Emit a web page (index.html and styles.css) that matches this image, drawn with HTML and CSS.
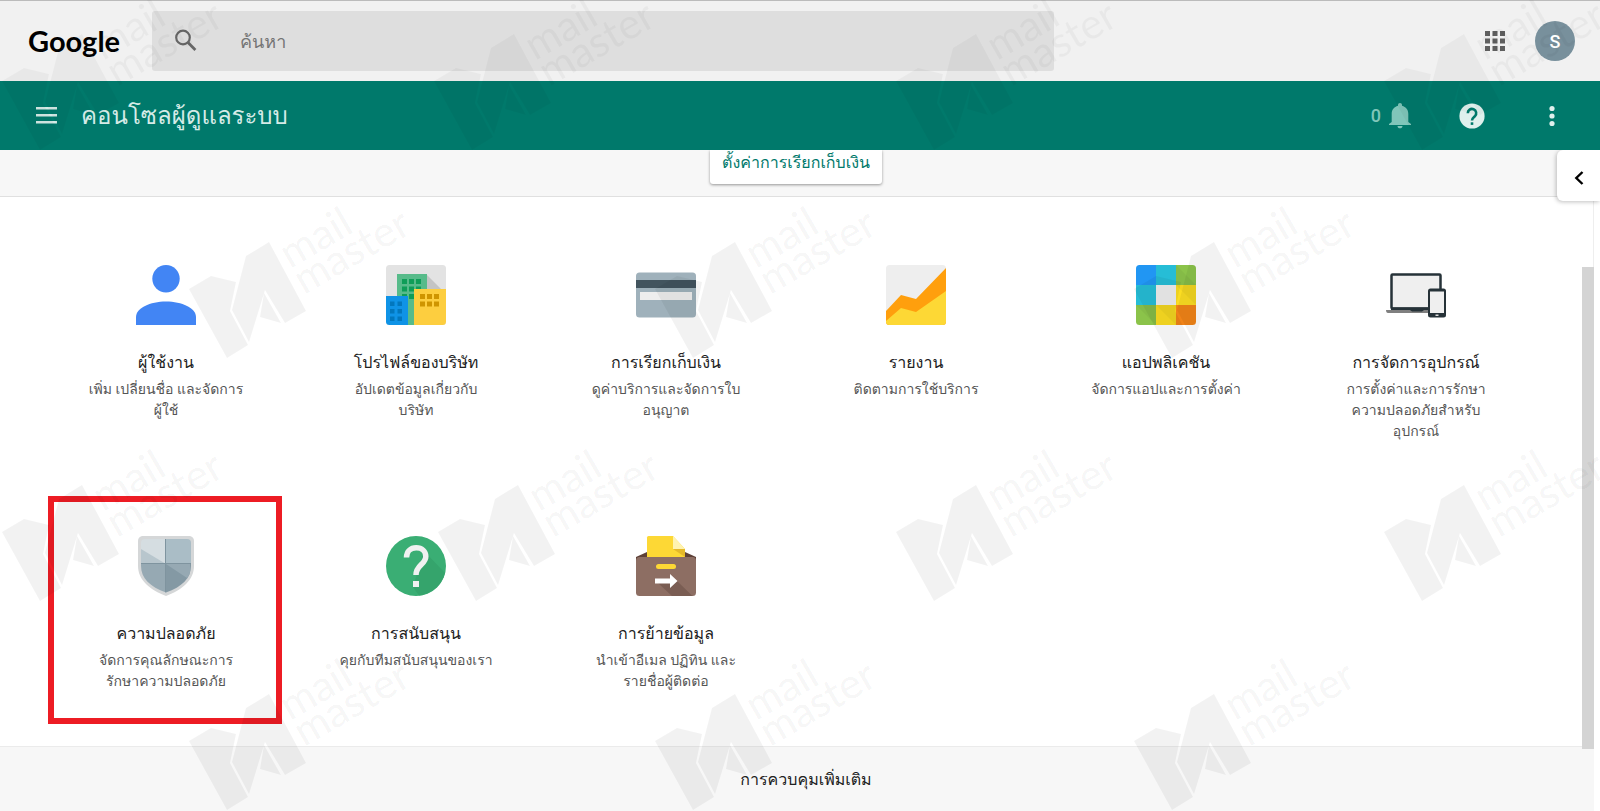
FILE: index.html
```html
<!DOCTYPE html>
<html lang="th">
<head>
<meta charset="utf-8">
<title>คอนโซลผู้ดูแลระบบ</title>
<link rel="stylesheet" href="styles.css">
</head>
<body>
<header class="topbar">
  <a class="logo" href="#">Google</a>
  <form class="search" role="search">
    <label class="search-label" for="q" aria-label="ค้นหา">
      <svg width="24" height="24" viewBox="0 0 24 24"><circle cx="9" cy="8.500" r="6.800" fill="none" stroke="#666" stroke-width="2.2"/><path d="M14 13.500l7.400 7.400" stroke="#666" stroke-width="2.8"/></svg>
    </label>
    <input class="search-input" id="q" type="text" placeholder="ค้นหา">
  </form>
  <div class="account">
    <button class="icon-btn" type="button" aria-label="แอป">
      <svg width="20" height="20" viewBox="0 0 20 20" fill="#5f5f5f"><path d="M0 0h5v5H0zM7.500 0h5v5h-5zM15 0h5v5h-5zM0 7.500h5v5H0zM7.500 7.500h5v5h-5zM15 7.500h5v5h-5zM0 15h5v5H0zM7.500 15h5v5h-5zM15 15h5v5h-5z"/></svg>
    </button>
    <button class="avatar" type="button">S</button>
  </div>
</header>

<nav class="appbar">
  <button class="icon-btn" type="button" aria-label="เมนู">
    <svg width="21" height="17" viewBox="0 0 21 17" fill="#d5ebe7"><path d="M0 0h21v2.500H0zM0 7h21v2.500H0zM0 14h21v2.500H0z"/></svg>
  </button>
  <h1 class="appbar-title">คอนโซลผู้ดูแลระบบ</h1>
  <div class="appbar-actions">
    <button class="icon-btn bell" type="button">0
      <svg width="22" height="26" viewBox="0 0 22 26" fill="#80c6ba"><path d="M11 0c1.200 0 2 .8 2 2v.8c4 1 6.300 4.200 6.300 8.200v8l2.700 2v1H0v-1l2.700-2v-8C2.700 7 5 3.800 9 2.800V2c0-1.200.8-2 2-2zM8.500 23h5c0 1.400-1.100 2.300-2.500 2.300S8.500 24.400 8.500 23z"/></svg>
    </button>
    <button class="icon-btn" type="button" aria-label="ความช่วยเหลือ">
      <svg width="26" height="26" viewBox="0 0 26 26"><circle cx="13" cy="13" r="12.600" fill="#dff0ed"/><path d="M8.800 10.200a4.200 4.200 0 1 1 7.200 2.900c-1.500 1.500-3 2.200-3 4.400" fill="none" stroke="#00796b" stroke-width="2.600"/><path d="M11.700 19.300h2.600v2.600h-2.600z" fill="#00796b"/></svg>
    </button>
    <button class="icon-btn" type="button" aria-label="เพิ่มเติม">
      <svg width="6" height="22" viewBox="0 0 6 22" fill="#dff0ed"><circle cx="3" cy="3.500" r="2.600"/><circle cx="3" cy="11" r="2.600"/><circle cx="3" cy="18.500" r="2.600"/></svg>
    </button>
  </div>
</nav>

<main class="content">
  <div class="banner">
    <button class="billing-btn" type="button">ตั้งค่าการเรียกเก็บเงิน</button>
    <button class="panel-toggle" type="button" aria-label="เปิดแผง">
      <svg width="10" height="14" viewBox="0 0 10 14"><path d="M8.500 1L2.300 7l6.200 6" fill="none" stroke="#000" stroke-width="2.400"/></svg>
    </button>
  </div>

  <div class="cards">
    <a class="card" href="#">
      <svg class="card-icon" viewBox="0 0 60 60" fill="#4285f4"><circle cx="30" cy="13.700" r="13.700"/><path d="M0 60v-8c0-9 14-15.600 30-15.600S60 43 60 52v8z"/></svg>
      <h2 class="card-title">ผู้ใช้งาน</h2>
      <p class="card-text">เพิ่ม เปลี่ยนชื่อ และจัดการ<br>ผู้ใช้</p>
    </a>
    <a class="card" href="#">
      <svg class="card-icon" viewBox="0 0 60 60">
        <clipPath id="tile"><rect width="60" height="60" rx="3.500"/></clipPath>
        <g clip-path="url(#tile)"><path d="M0 0h60v60H0z" fill="#e3e3e3"/><path d="M40 9l15 15H40z" fill="#c4c4c4"/><path d="M11 9h30v51H11z" fill="#57bb8a"/><path d="M16 14h5v5h-5zM23 14h5v5h-5zM30 14h5v5h-5zM16 21.500h5v5h-5zM23 21.500h5v5h-5zM30 21.500h5v5h-5zM16 29h5v5h-5zM23 29h5v5h-5z" fill="#0f9d58"/><path d="M0 31h22v29H0z" fill="#0f93e6"/><path d="M4 36.500h4.500v4.500H4zM11.500 36.500H16v4.500h-4.500zM4 44h4.500v4.500H4zM11.500 44H16v4.500h-4.500zM4 51.500h4.500V56H4zM11.500 51.500H16V56h-4.500z" fill="#0277bd"/><path d="M28 24h32v36H28z" fill="#fdce3f"/><path d="M34 29h5v5h-5zM41 29h5v5h-5zM48 29h5v5h-5zM34 36.500h5v5h-5zM41 36.500h5v5h-5zM48 36.500h5v5h-5z" fill="#cf9500"/></g>
      </svg>
      <h2 class="card-title">โปรไฟล์ของบริษัท</h2>
      <p class="card-text">อัปเดตข้อมูลเกี่ยวกับ<br>บริษัท</p>
    </a>
    <a class="card" href="#">
      <svg class="card-icon" viewBox="0 0 60 60"><rect y="7.500" width="60" height="45" rx="3.500" fill="#9fb1bb"/><path d="M0 15h60v8H0z" fill="#42545e"/><path d="M4 27h52v8H4z" fill="#eee"/></svg>
      <h2 class="card-title">การเรียกเก็บเงิน</h2>
      <p class="card-text">ดูค่าบริการและจัดการใบ<br>อนุญาต</p>
    </a>
    <a class="card" href="#">
      <svg class="card-icon" viewBox="0 0 60 60"><g clip-path="url(#tile)"><path d="M0 0h60v60H0z" fill="#eee"/><path d="M0 46l15-16 15 4L60 3v57H0z" fill="#ff9f0d"/><path d="M0 56l15-13 15 4 30-21v34H0z" fill="#fdd835"/></g></svg>
      <h2 class="card-title">รายงาน</h2>
      <p class="card-text">ติดตามการใช้บริการ</p>
    </a>
    <a class="card" href="#">
      <svg class="card-icon" viewBox="0 0 60 60"><g clip-path="url(#tile)"><path d="M0 0h20v20H0z" fill="#2196f3"/><path d="M20 0h20v20H20zM0 20h20v20H0z" fill="#26bdd6"/><path d="M40 0h20v20H40zM0 40h20v20H0z" fill="#8bc34a"/><path d="M40 20h20v20H40zM20 40h20v20H20z" fill="#fbdd22"/><path d="M40 40h20v20H40z" fill="#f08318"/><path d="M20 20h20v20H20z" fill="#eee"/><path d="M40 0l20 20H40zM40 20l20 20V20zM0 40l20 20V40zM20 40h20v20z" fill="#000" fill-opacity=".04"/></g></svg>
      <h2 class="card-title">แอปพลิเคชัน</h2>
      <p class="card-text">จัดการแอปและการตั้งค่า</p>
    </a>
    <a class="card" href="#">
      <svg class="card-icon" viewBox="0 0 60 60"><path d="M0 45h44v3H2q-2 0-2-3z" fill="#808080"/><rect x="5.500" y="9.500" width="49" height="34" rx="1" fill="#efefef" stroke="#263238" stroke-width="2.500"/><path d="M5 42.500h42V45H38l-2 1.500H26L24 45H5z" fill="#263238"/><rect x="42" y="23.500" width="18" height="29" rx="2.500" fill="#263238"/><path d="M44 26.500h14v21.500H44z" fill="#efefef"/><path d="M49.500 49.500h3v1.500h-3z" fill="#ddd"/></svg>
      <h2 class="card-title">การจัดการอุปกรณ์</h2>
      <p class="card-text">การตั้งค่าและการรักษา<br>ความปลอดภัยสำหรับ<br>อุปกรณ์</p>
    </a>
    <a class="card card-marked" href="#">
      <svg class="card-icon" viewBox="0 0 60 60">
        <path d="M6 0h48q4 1 4 5v25c0 14-12 24-28 30C14 54 2 44 2 30V5q0-4 4-5z" fill="#d5d7d8"/>
        <clipPath id="shield"><path d="M9 3h42q4 0 4 4v23c0 12-9 21-25 26.500C14 51 5 42 5 30V7q0-4 4-4z"/></clipPath>
        <g clip-path="url(#shield)"><path d="M0 0h30v28H0z" fill="#d5dde1"/><path d="M5 13l25 15H5z" fill="#b8c6cd"/><path d="M30 0h30v28H30z" fill="#aabdc6"/><path d="M0 28h30v32H0z" fill="#96a9b3"/><path d="M30 28h30v32H30z" fill="#8499a4"/><path d="M30 28h24v16z" fill="#96a9b3"/><path d="M29 0h1v60h-1zM0 27h60v1H0z" fill="#7f949f"/></g>
      </svg>
      <h2 class="card-title">ความปลอดภัย</h2>
      <p class="card-text">จัดการคุณลักษณะการ<br>รักษาความปลอดภัย</p>
    </a>
    <a class="card" href="#">
      <svg class="card-icon" viewBox="0 0 60 60"><circle cx="30" cy="30" r="30" fill="#3aae74"/><path d="M38 15l21 22a30 30 0 0 1-26 22.500L27 51l6-20z" fill="#35a46c"/><path d="M20.500 21.500c0-6 4-9.700 9.700-9.700s9.600 3.700 9.600 8.700c0 8-9.800 8.500-9.800 18.500" fill="none" stroke="#f1f1f1" stroke-width="5.500"/><path d="M27 45h6v6h-6z" fill="#f1f1f1"/></svg>
      <h2 class="card-title">การสนับสนุน</h2>
      <p class="card-text">คุยกับทีมสนับสนุนของเรา</p>
    </a>
    <a class="card" href="#">
      <svg class="card-icon" viewBox="0 0 60 60"><path d="M0 21l11-5h38l11 5v4H0z" fill="#5d4037"/><path d="M12.500 0H37l12 13v10H11V1.500Q11 0 12.500 0z" fill="#fdd835"/><path d="M37 0l12 13H37z" fill="#fff3b0"/><path d="M37 13h12v8z" fill="#e5b92a"/><rect y="21" width="60" height="39" rx="3.500" fill="#8d6e63"/><path d="M41 45L56.500 60H36L22 47z" fill="#7a5d53"/><rect x="20" y="28" width="20" height="5" rx="2.500" fill="#fdd835"/><path d="M19 42.500h15V38l7.500 7-7.500 7v-4.500H19z" fill="#fff"/></svg>
      <h2 class="card-title">การย้ายข้อมูล</h2>
      <p class="card-text">นำเข้าอีเมล ปฏิทิน และ<br>รายชื่อผู้ติดต่อ</p>
    </a>
  </div>

  <div class="scroll-thumb"></div>
</main>

<footer class="more"><button class="more-btn" type="button">การควบคุมเพิ่มเติม</button></footer>

<svg class="watermark" aria-hidden="true">
  <defs>
    <g id="mark">
      <path d="M0 0l22-13 25 6-6 29 18 34-21 13zM57-33l23-14 37 69-21 12L76 1 60 53 43 21zM75 4l17 30-21-6z"/>
      <g class="mark-text"><text transform="translate(101 -20) rotate(-30)">mail</text><text transform="translate(115 6) rotate(-30)">master</text></g>
    </g>
  </defs>
  <g class="faint"><use href="#mark" x="2" y="81"/><use href="#mark" x="434" y="81"/><use href="#mark" x="896" y="81"/><use href="#mark" x="1384" y="81"/></g>
  <use href="#mark" x="189" y="289"/><use href="#mark" x="655" y="289"/><use href="#mark" x="1134" y="289"/>
  <use href="#mark" x="2" y="532"/><use href="#mark" x="438" y="532"/><use href="#mark" x="896" y="532"/><use href="#mark" x="1384" y="532"/>
  <use href="#mark" x="189" y="741"/><use href="#mark" x="655" y="741"/><use href="#mark" x="1134" y="741"/>
</svg>
</body>
</html>
```
FILE: styles.css
```css
* { box-sizing: border-box; }
body {
  margin: 0;
  min-height: 100vh;
  display: flex;
  flex-direction: column;
  position: relative;
  overflow-x: hidden;
  background: #fff;
  color: #212121;
  font-family: Roboto, Tahoma, Loma, Waree, "Noto Sans Thai Looped", "Noto Sans", sans-serif;
}
button { font: inherit; border: 0; background: none; padding: 0; cursor: pointer; }
svg { display: block; }
a { color: inherit; text-decoration: none; }

.topbar {
  display: flex;
  align-items: center;
  height: 81px;
  padding: 0 25px 0 28px;
  border-top: 1px solid #bbb;
  background: #f1f1f1;
}
.logo { width: 124px; flex: none; font: 700 29px/40px Lato, sans-serif; color: #000; }
.search {
  display: flex;
  align-items: center;
  flex: 0 1 902px;
  height: 60px;
  padding-left: 22px;
  background: #dedede;
  border-radius: 3px;
}
.search-label { margin-right: 42px; }
.search-input { flex: 1; border: 0; outline: 0; padding: 0; background: none; font: inherit; font-size: 18px; }
.search-input::placeholder { color: #757575; opacity: 1; }
.account { display: flex; align-items: center; gap: 30px; margin-left: auto; }
.avatar { width: 40px; height: 40px; border-radius: 50%; background: #78909c; color: #fff; font-size: 18px; font-weight: 500; }

.appbar {
  display: flex;
  align-items: center;
  gap: 24px;
  height: 69px;
  padding: 0 45px 0 36px;
  background: #00796b;
}
.appbar-title { margin: 0; font-size: 24px; line-height: 40px; font-weight: 500; color: #d5ebe7; }
.appbar-actions { display: flex; align-items: center; gap: 48px; margin-left: auto; }
.appbar-actions .icon-btn:last-child { margin-left: 16px; }
.bell { display: flex; align-items: center; gap: 8px; color: #80c6ba; font-size: 18px; font-weight: 500; }

.content { position: relative; }
.banner {
  display: flex;
  justify-content: center;
  height: 47px;
  padding-right: 8px;
  background: #f7f7f7;
  border-bottom: 1px solid #e0e0e0;
}
.billing-btn {
  height: 34px;
  width: 172px;
  padding-bottom: 8px;
  background: #fff;
  border-radius: 0 0 3px 3px;
  box-shadow: 0 1px 3px rgba(0, 0, 0, .4);
  clip-path: inset(0 -4px -5px -4px);
  color: #00796b;
  font-size: 16px;
  line-height: 26px;
  font-weight: 500;
  white-space: nowrap;
}
.panel-toggle {
  position: absolute;
  top: 0;
  right: 0;
  display: flex;
  align-items: center;
  width: 43px;
  height: 51px;
  padding: 4px 0 0 17px;
  background: #fff;
  border-radius: 6px 0 0 6px;
  box-shadow: -1px 1px 4px rgba(0, 0, 0, .25);
  clip-path: inset(0 0 -6px -6px);
}

.cards {
  display: grid;
  grid-template-columns: repeat(6, 1fr);
  grid-template-rows: 271px 278px;
  margin-right: 6px;
  padding: 0 52px 0 41px;
  border-right: 1px solid #eee;
}
.card { display: flex; flex-direction: column; align-items: center; padding-top: 68px; position: relative; }
.card-icon { width: 60px; height: 60px; }
.card-title { margin: 24px 0 0; font-size: 16px; line-height: 28px; font-weight: 500; white-space: nowrap; }
.card-text { margin: 2px 0 0; font-size: 14px; line-height: 21px; color: #555; text-align: center; white-space: nowrap; }
.card-marked::before { content: ""; position: absolute; inset: 28px 9px 22px 7px; border: 6px solid #ed1c24; }

.scroll-thumb { position: absolute; top: 117px; bottom: -3px; right: 6px; width: 12px; background: #d4d4d4; }

.more { flex: 1; min-height: 65px; margin-right: 6px; padding: 0 0 0 18px; text-align: center; background: #f7f7f7; border-top: 1px solid #ebebeb; }
.more-btn { height: 65px; font-size: 16px; font-weight: 500; color: #212121; }

.watermark { position: absolute; inset: 0; width: 100%; height: 100%; pointer-events: none; fill: #000; fill-opacity: .05; }
.faint { opacity: .7; }
.mark-text { font: 400 42px Lato, sans-serif; }
```
